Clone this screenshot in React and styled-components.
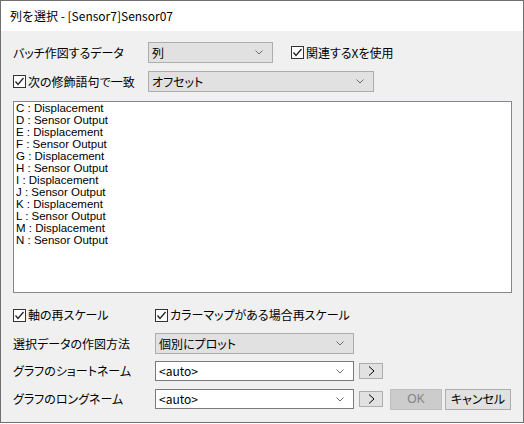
import React from "react";
import styled, { createGlobalStyle } from "styled-components";

const Global = createGlobalStyle`
  html, body { margin: 0; padding: 0; background: #ffffff; }
  body { font-family: "Noto Sans CJK JP", "Noto Sans", sans-serif; }
  * { box-sizing: border-box; }
`;

const Window = styled.div`
  width: 524px;
  height: 423px;
  border: 1px solid #6f6f6f;
  background: #f0f0f0;
  display: flex;
  flex-direction: column;
`;

const TitleBar = styled.div`
  height: 30px;
  background: #ffffff;
  display: flex;
  align-items: center;
  padding-left: 9px;
  font-size: 12px;
  line-height: 14px;
  color: #000;
`;

const Content = styled.div`
  flex: 1;
  display: flex;
  flex-direction: column;
  padding: 11px 11px 0 12px;
  font-size: 12px;
  color: #000;
  font-feature-settings: "palt";
`;

const Row = styled.div`
  display: flex;
  align-items: center;
  height: ${(p) => p.h || 21}px;
  margin-top: ${(p) => p.mt || 0}px;
`;

const Label = styled.div`
  width: ${(p) => p.w}px;
  flex: none;
  line-height: 14px;
  white-space: nowrap;
`;

const CheckWrap = styled.label`
  display: flex;
  align-items: center;
  gap: 2px;
  width: ${(p) => (p.w ? `${p.w}px` : "auto")};
  margin-left: ${(p) => p.ml || 0}px;
  flex: none;
  line-height: 14px;
  white-space: nowrap;
`;

const Box = styled.span`
  width: 13px;
  height: 13px;
  border: 1px solid #333333;
  background: #ffffff;
  display: inline-flex;
  align-items: center;
  justify-content: center;
  flex: none;
`;

const Select = styled.div`
  width: ${(p) => p.w}px;
  height: ${(p) => p.h || 21}px;
  border: 1px solid ${(p) => (p.edit ? "#7a7a7a" : "#adadad")};
  background: ${(p) => (p.edit ? "#ffffff" : "#e1e1e1")};
  display: flex;
  align-items: center;
  justify-content: space-between;
  padding: 0 9px 0 3px;
  flex: none;
  line-height: 14px;
  white-space: nowrap;
`;

const ListBox = styled.div`
  height: 192px;
  margin-top: 9px;
  width: 499px;
  border: 1px solid #828790;
  background: #ffffff;
  padding: 0 0 0 2px;
  font-family: "Liberation Sans", Arial, sans-serif;
  font-size: 11.5px;
  font-feature-settings: normal;
`;

const ListItem = styled.div`
  height: 12px;
  line-height: 12px;
  white-space: nowrap;
`;

const SmallButton = styled.div`
  width: 24px;
  height: 16px;
  margin-left: 5px;
  border: 1px solid #adadad;
  background: #e1e1e1;
  display: flex;
  align-items: center;
  justify-content: center;
  flex: none;
`;

const Button = styled.div`
  width: ${(p) => p.w}px;
  height: 21px;
  margin-left: ${(p) => p.ml || 0}px;
  border: 1px solid ${(p) => (p.disabled ? "#bfbfbf" : "#adadad")};
  background: ${(p) => (p.disabled ? "#cccccc" : "#e1e1e1")};
  color: ${(p) => (p.disabled ? "#838383" : "#000000")};
  display: flex;
  align-items: center;
  justify-content: center;
  flex: none;
  line-height: 14px;
  font-family: ${(p) => (p.latin ? '"Liberation Sans", Arial, sans-serif' : "inherit")};
`;

const Chevron = () => (
  <svg width="8" height="5" viewBox="0 0 8 5">
    <polyline points="0.5,0.5 4,4 7.5,0.5" fill="none" stroke="#6d6d6d" strokeWidth="1" />
  </svg>
);

const Check = () => (
  <svg width="11" height="11" viewBox="0 0 11 11">
    <polyline points="1.5,5.5 4,8.5 9.5,2" fill="none" stroke="#222" strokeWidth="1.3" />
  </svg>
);

const Arrow = () => (
  <svg width="7" height="10" viewBox="0 0 7 10">
    <polyline points="1,0.5 6,5 1,9.5" fill="none" stroke="#000" strokeWidth="1" />
  </svg>
);

const CheckBox = ({ children, w, ml }) => (
  <CheckWrap w={w} ml={ml}>
    <Box>
      <Check />
    </Box>
    <span>{children}</span>
  </CheckWrap>
);

const items = [
  "C : Displacement",
  "D : Sensor Output",
  "E : Displacement",
  "F : Sensor Output",
  "G : Displacement",
  "H : Sensor Output",
  "I : Displacement",
  "J : Sensor Output",
  "K : Displacement",
  "L : Sensor Output",
  "M : Displacement",
  "N : Sensor Output",
];

export default function App() {
  return (
    <>
      <Global />
      <Window>
        <TitleBar>列を選択 - [Sensor7]Sensor07</TitleBar>
        <Content>
          <Row>
            <Label w={135}>バッチ作図するデータ</Label>
            <Select w={125}>
              <span>列</span>
              <Chevron />
            </Select>
            <CheckBox ml={18}>関連するXを使用</CheckBox>
          </Row>
          <Row mt={8}>
            <CheckBox w={135}>次の修飾語句で一致</CheckBox>
            <Select w={226}>
              <span>オフセット</span>
              <Chevron />
            </Select>
          </Row>
          <ListBox>
            {items.map((t) => (
              <ListItem key={t}>{t}</ListItem>
            ))}
          </ListBox>
          <Row mt={12} h={20}>
            <CheckBox w={142}>軸の再スケール</CheckBox>
            <CheckBox>カラーマップがある場合再スケール</CheckBox>
          </Row>
          <Row mt={8}>
            <Label w={142}>選択データの作図方法</Label>
            <Select w={199}>
              <span>個別にプロット</span>
              <Chevron />
            </Select>
          </Row>
          <Row mt={7} h={20}>
            <Label w={142}>グラフのショートネーム</Label>
            <Select w={199} h={20} edit>
              <span>&lt;auto&gt;</span>
              <Chevron />
            </Select>
            <SmallButton>
              <Arrow />
            </SmallButton>
          </Row>
          <Row mt={8} h={20}>
            <Label w={142}>グラフのロングネーム</Label>
            <Select w={199} h={20} edit>
              <span>&lt;auto&gt;</span>
              <Chevron />
            </Select>
            <SmallButton>
              <Arrow />
            </SmallButton>
            <Button w={52} ml={7} disabled latin>
              OK
            </Button>
            <Button w={66} ml={3}>
              キャンセル
            </Button>
          </Row>
        </Content>
      </Window>
    </>
  );
}
